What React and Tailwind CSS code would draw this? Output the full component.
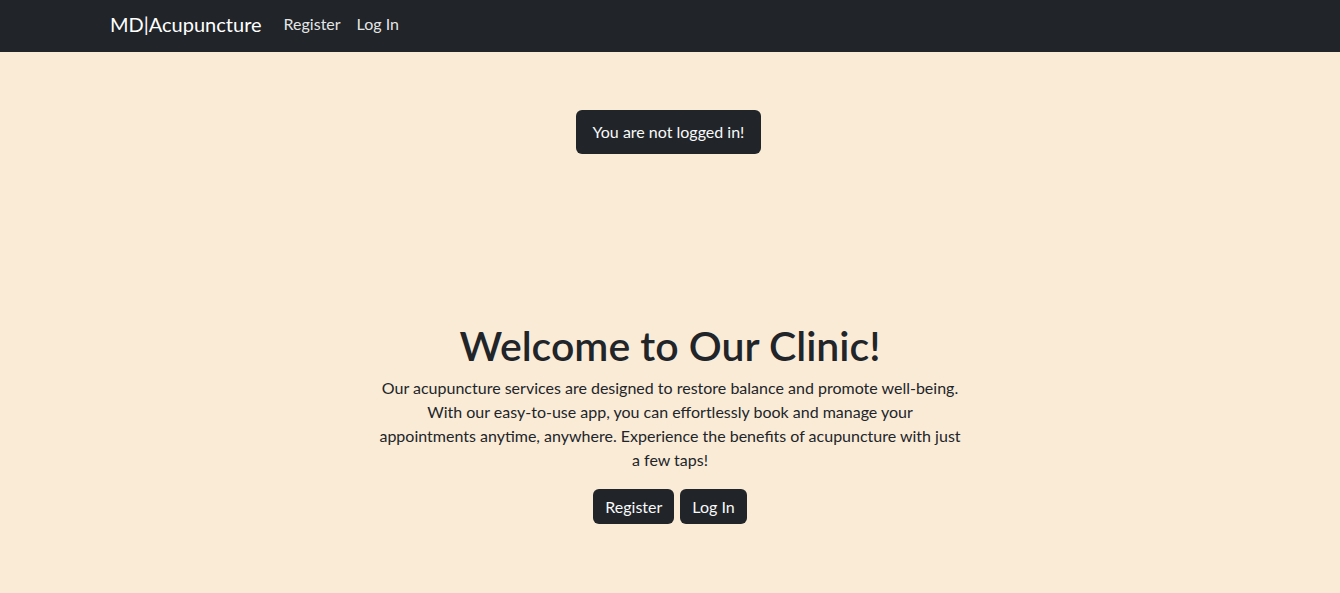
import React from "react";

export default function App() {
  return (
    <div className="min-h-[593px] bg-[#faebd7] text-[#212529] font-['Lato','Liberation_Sans',sans-serif]">
      <nav className="h-[52px] bg-[#212529]">
        <div className="max-w-[1140px] mx-auto px-3 pb-1 h-full flex items-center">
          <a href="#" className="text-[20px] text-white mr-[14px] -ml-[2px]">
            MD|Acupuncture
          </a>
          <a href="#" className="text-[16px] text-[#ffffffe6] px-2">
            Register
          </a>
          <a href="#" className="text-[16px] text-[#ffffffe6] px-2">
            Log In
          </a>
        </div>
      </nav>

      <div className="flex justify-center pt-[58px]">
        <div className="h-[44px] px-[17px] flex items-center rounded-md bg-[#212529] text-[#f8f9fa] text-[16px] -ml-[3px]">
          You are not logged in!
        </div>
      </div>

      <section className="flex flex-col items-center text-center pt-[168px]">
        <h1 className="text-[41px] leading-[48px] font-semibold">Welcome to Our Clinic!</h1>
        <p className="max-w-[584px] text-[16px] leading-6 mt-[6px]">
          Our acupuncture services are designed to restore balance and promote well-being. With
          our easy-to-use app, you can effortlessly book and manage your appointments anytime,
          anywhere. Experience the benefits of acupuncture with just a few taps!
        </p>
        <div className="flex gap-[6px] mt-[17px]">
          <button className="h-[35px] px-3 rounded-md bg-[#212529] text-[#f8f9fa] text-[16px]">
            Register
          </button>
          <button className="h-[35px] px-3 rounded-md bg-[#212529] text-[#f8f9fa] text-[16px]">
            Log In
          </button>
        </div>
      </section>
    </div>
  );
}
